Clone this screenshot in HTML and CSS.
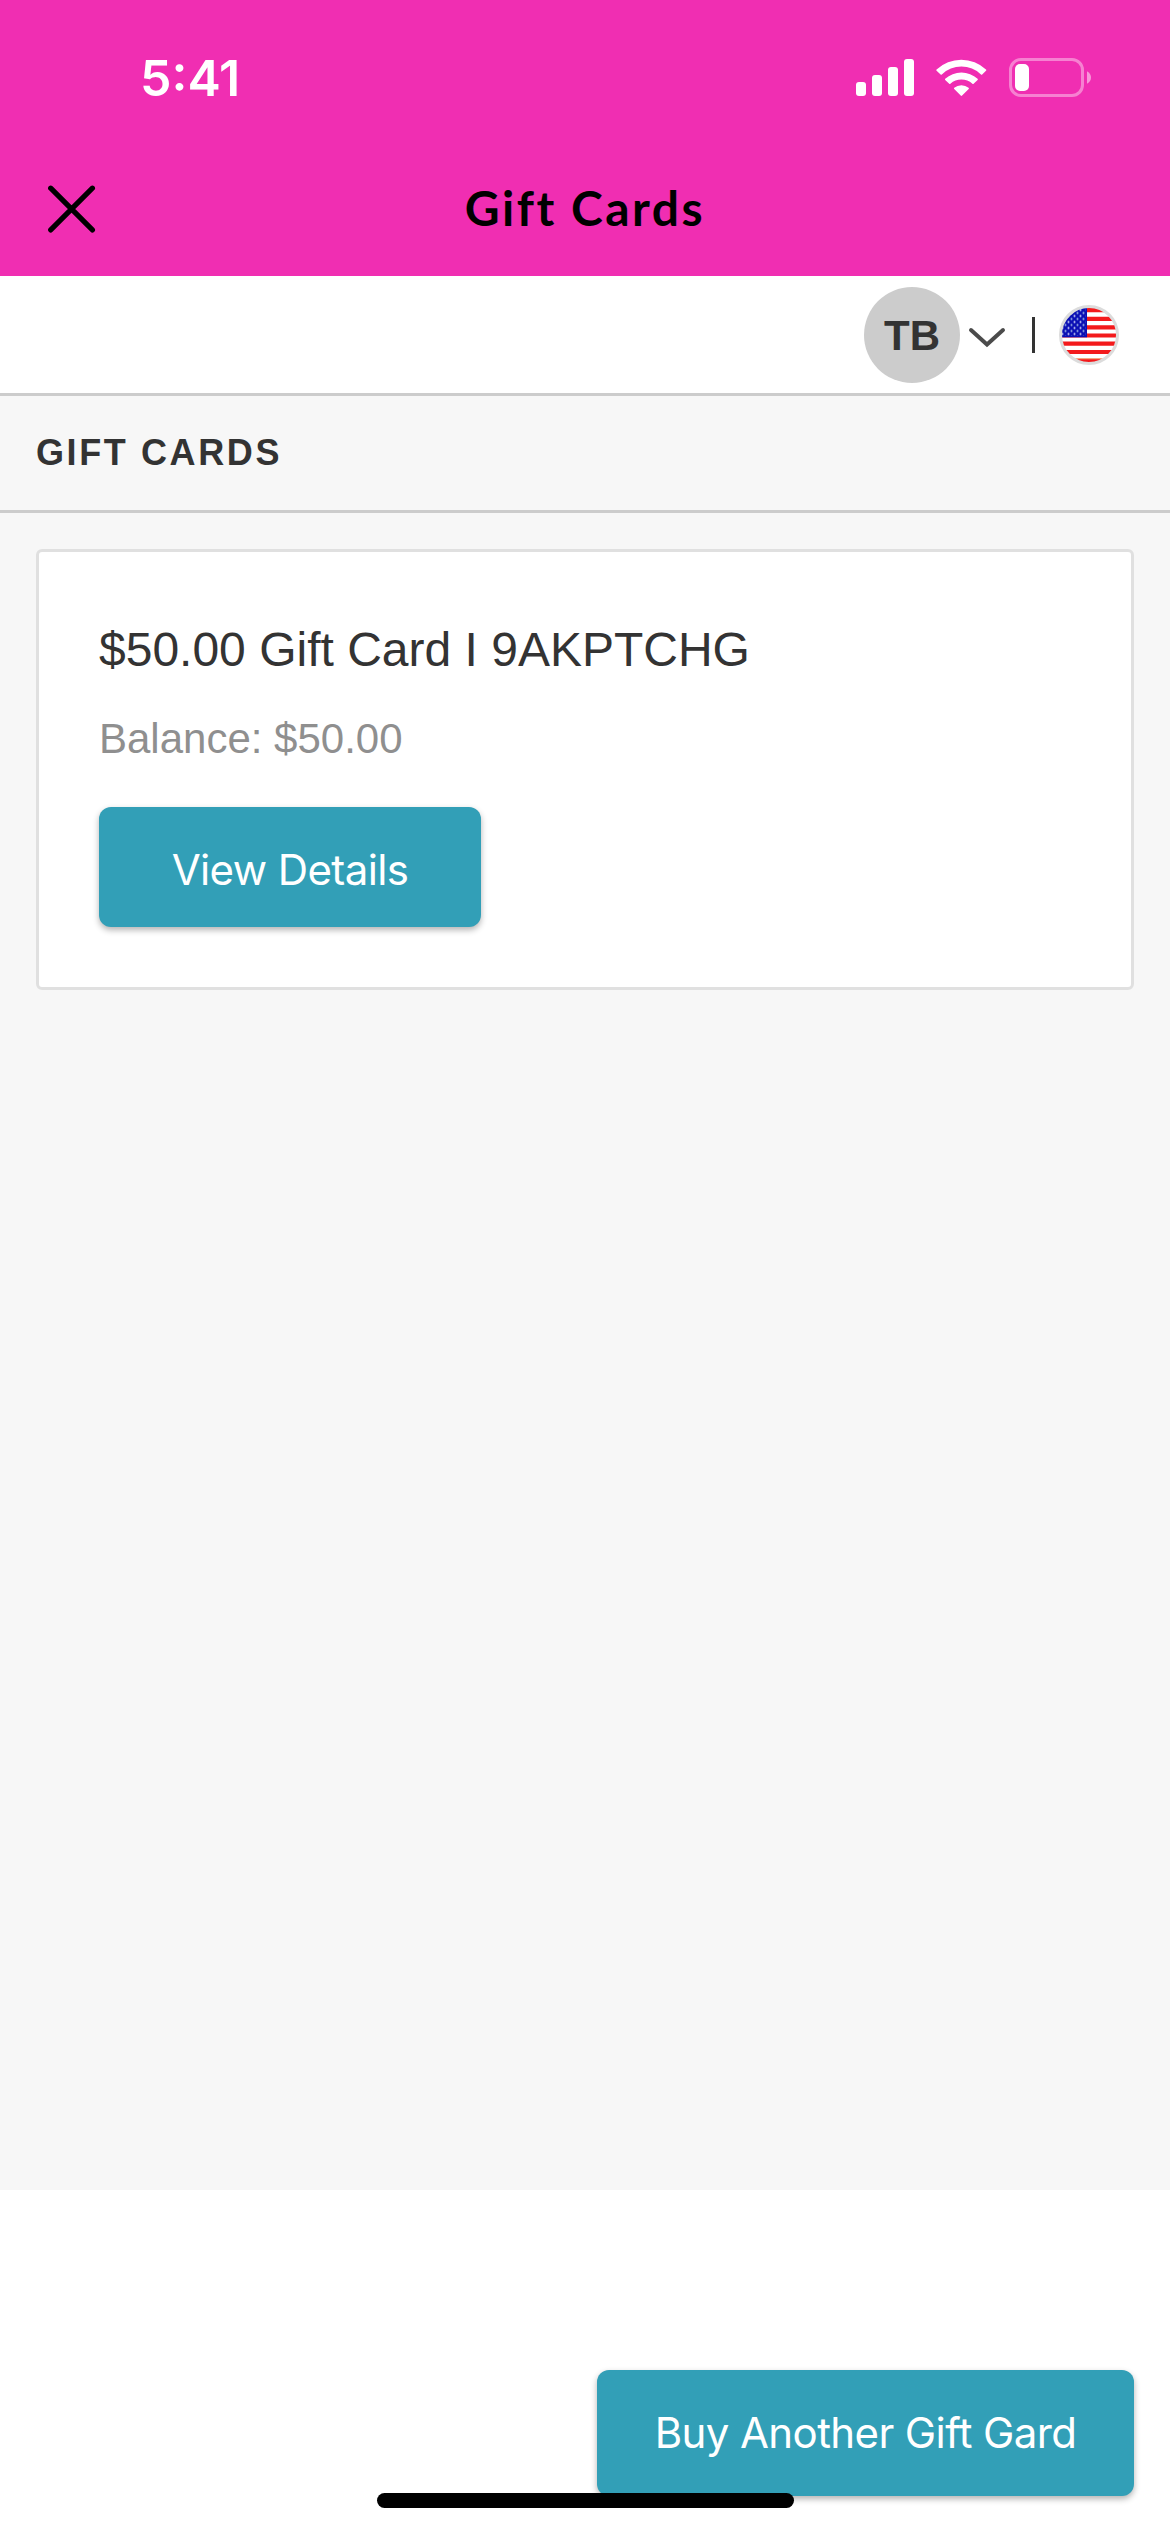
FILE: index.html
```html
<!DOCTYPE html>
<html lang="en">
<head>
<meta charset="utf-8">
<title>Gift Cards</title>
<link rel="stylesheet" href="styles.css">
</head>
<body>
<header class="top">
  <div class="status">
    <span class="time">5:41</span>
    <svg class="status-icons" width="238" height="44" viewBox="854 56 238 44" fill="#fff">
      <rect x="856" y="82" width="10" height="14" rx="3"/>
      <rect x="872" y="75" width="10" height="21" rx="3"/>
      <rect x="888" y="67" width="10" height="29" rx="3"/>
      <rect x="904" y="59" width="10" height="37" rx="3"/>
      <path d="M936.6 69.6Q936 70.2 936.6 70.8L940.6 74.4Q941.2 75 941.8 74.4A28.5 28.5 0 0 1 981 74.4Q981.600 75 982.2 74.4L986 70.8Q986.6 70.2 986 69.6A36 36 0 0 0 936.6 69.6Z"/>
      <path d="M945.2 78.8Q944.6 79.400 945.200 80L949.2 83.7Q949.800 84.3 950.4 83.7A16.500 16.500 0 0 1 972.4 83.700Q973 84.3 973.6 83.700L977.6 80Q978.200 79.4 977.6 78.8A24 24 0 0 0 945.2 78.8Z"/>
      <path d="M954.200 87.700Q953.6 88.4 954.2 89L960.700 95.600Q961.4 96.3 962.100 95.600L968.700 89Q969.300 88.400 968.600 87.700A11.500 11.500 0 0 0 954.200 87.700Z"/>
      <rect x="1010.500" y="59.500" width="72" height="36" rx="10.500" fill="none" stroke="#fff" stroke-opacity=".4" stroke-width="3"/>
      <rect x="1015" y="64" width="14" height="27" rx="5"/>
      <path d="M1087 71.200Q1091 73.500 1091 77.500T1087 83.800Z" fill-opacity=".5"/>
    </svg>
  </div>
  <div class="nav">
    <svg class="close" width="48" height="48" viewBox="0 0 48 48" fill="none" stroke="#000" stroke-width="5.200" stroke-linecap="round"><path d="M2.700 3.200L44.400 44.900M44.400 3.200L2.700 44.900"/></svg>
    <h1 class="nav-title">Gift Cards</h1>
  </div>
</header>
<div class="account">
  <span class="avatar">TB</span>
  <svg class="chevron" width="38" height="22" viewBox="0 0 38 22" fill="none" stroke="#4b4b4b" stroke-width="4" stroke-linecap="round"><path d="M3 4L19 18.500L35 4"/></svg>
  <span class="divider"></span>
  <svg class="flag" width="60" height="60" viewBox="0 0 60 60">
    <defs>
      <clipPath id="disc"><circle cx="30" cy="30" r="28"/></clipPath>
      <pattern id="stars" x="2" y="3.500" width="6" height="6" patternUnits="userSpaceOnUse">
        <circle cx="1.500" cy="1.500" r="1" fill="#dfe6ff"/><circle cx="4.500" cy="4.500" r="1" fill="#a9c4e8"/>
      </pattern>
    </defs>
    <g clip-path="url(#disc)">
      <rect width="60" height="60" fill="#fff"/>
      <path d="M0 5.200H60M0 13.900H60M0 22.300H60M0 30.500H60M0 38.700H60M0 47H60M0 55.700H60" stroke="#f31a1c" stroke-width="4.200"/>
      <path d="M0 53.700H60" stroke="#f5a880" stroke-width="1.300"/>
      <rect width="28" height="32.300" fill="#0a0fb4"/>
      <rect x="2" y="3.500" width="24.500" height="27.500" fill="url(#stars)"/>
    </g>
    <circle cx="30" cy="30" r="28.500" fill="none" stroke="#dcdcdc" stroke-width="3"/>
  </svg>
</div>
<main class="content">
  <h2 class="section-title"><span>GIFT CARDS</span></h2>
  <section class="card">
    <h3 class="card-name">$50.00 Gift Card I 9AKPTCHG</h3>
    <p class="balance">Balance: $50.00</p>
    <button class="btn btn-details">View Details</button>
  </section>
</main>
<footer class="footer">
  <button class="btn btn-buy">Buy Another Gift Gard</button>
  <div class="home-bar"></div>
</footer>
</body>
</html>
```
FILE: styles.css
```css
* { box-sizing: border-box; margin: 0; padding: 0; }
body {
  width: 1170px;
  height: 2532px;
  display: flex;
  flex-direction: column;
  background: #fff;
  color: #333;
  font-family: "Liberation Sans", Arial, sans-serif;
  overflow: hidden;
}
.top { height: 276px; background: #f02eb2; }
.status {
  height: 156px;
  display: flex;
  justify-content: space-between;
  padding: 48px 78px 0 140px;
}
.time { font: 600 50px/60px Inter, sans-serif; color: #fff; }
.status-icons { margin-top: 8px; }
.nav {
  height: 120px;
  display: grid;
  grid-template-columns: 48px 1fr 48px;
  padding: 0 48px;
}
.close { margin-top: 29px; }
.nav-title {
  font: 700 48px/60px Lato, sans-serif;
  letter-spacing: 2.5px;
  color: #000;
  text-align: center;
  margin-top: 22px;
}
.account {
  height: 120px;
  border-bottom: 3px solid #ccc;
  display: flex;
  align-items: center;
  justify-content: flex-end;
  padding-right: 51px;
}
.avatar {
  width: 96px;
  height: 96px;
  border-radius: 50%;
  background: #ccc;
  font-size: 42px;
  font-weight: 700;
  line-height: 97px;
  text-align: center;
}
.chevron { margin: 5px 26px 0 8px; }
.divider { width: 3px; height: 36px; background: #333; margin-right: 24px; }
.content { height: 1794px; background: #f7f7f7; }
.section-title {
  height: 117px;
  border-bottom: 3px solid #ccc;
  padding-left: 36px;
  font-size: 36px;
  line-height: 114px;
  letter-spacing: 2.6px;
}
.card {
  height: 441px;
  margin: 36px 36px 0;
  padding: 60px;
  background: #fff;
  border: 3px solid #e0e0e0;
  border-radius: 6px;
}
.card-name { font-size: 48px; font-weight: 400; line-height: 75px; white-space: nowrap; }
.balance { font-size: 42px; line-height: 60px; margin-top: 22px; color: #8f8f8f; }
.btn {
  display: block;
  border: 0;
  border-radius: 12px;
  background: #329fb7;
  color: #fff;
  font: 400 42px/50px Inter, sans-serif;
  letter-spacing: -0.6px;
  white-space: nowrap;
  box-shadow: 0 3px 6px rgba(0, 0, 0, .3);
}
.btn-details { width: 382px; height: 120px; margin-top: 38px; padding-top: 6px; }
.footer {
  flex: 1;
  position: relative;
  display: flex;
  justify-content: flex-end;
  align-items: flex-end;
  padding: 0 36px 36px;
}
.btn-buy { width: 537px; height: 126px; }
.home-bar {
  position: absolute;
  left: 377px;
  bottom: 24px;
  width: 417px;
  height: 15px;
  border-radius: 8px;
  background: #000;
}
```
